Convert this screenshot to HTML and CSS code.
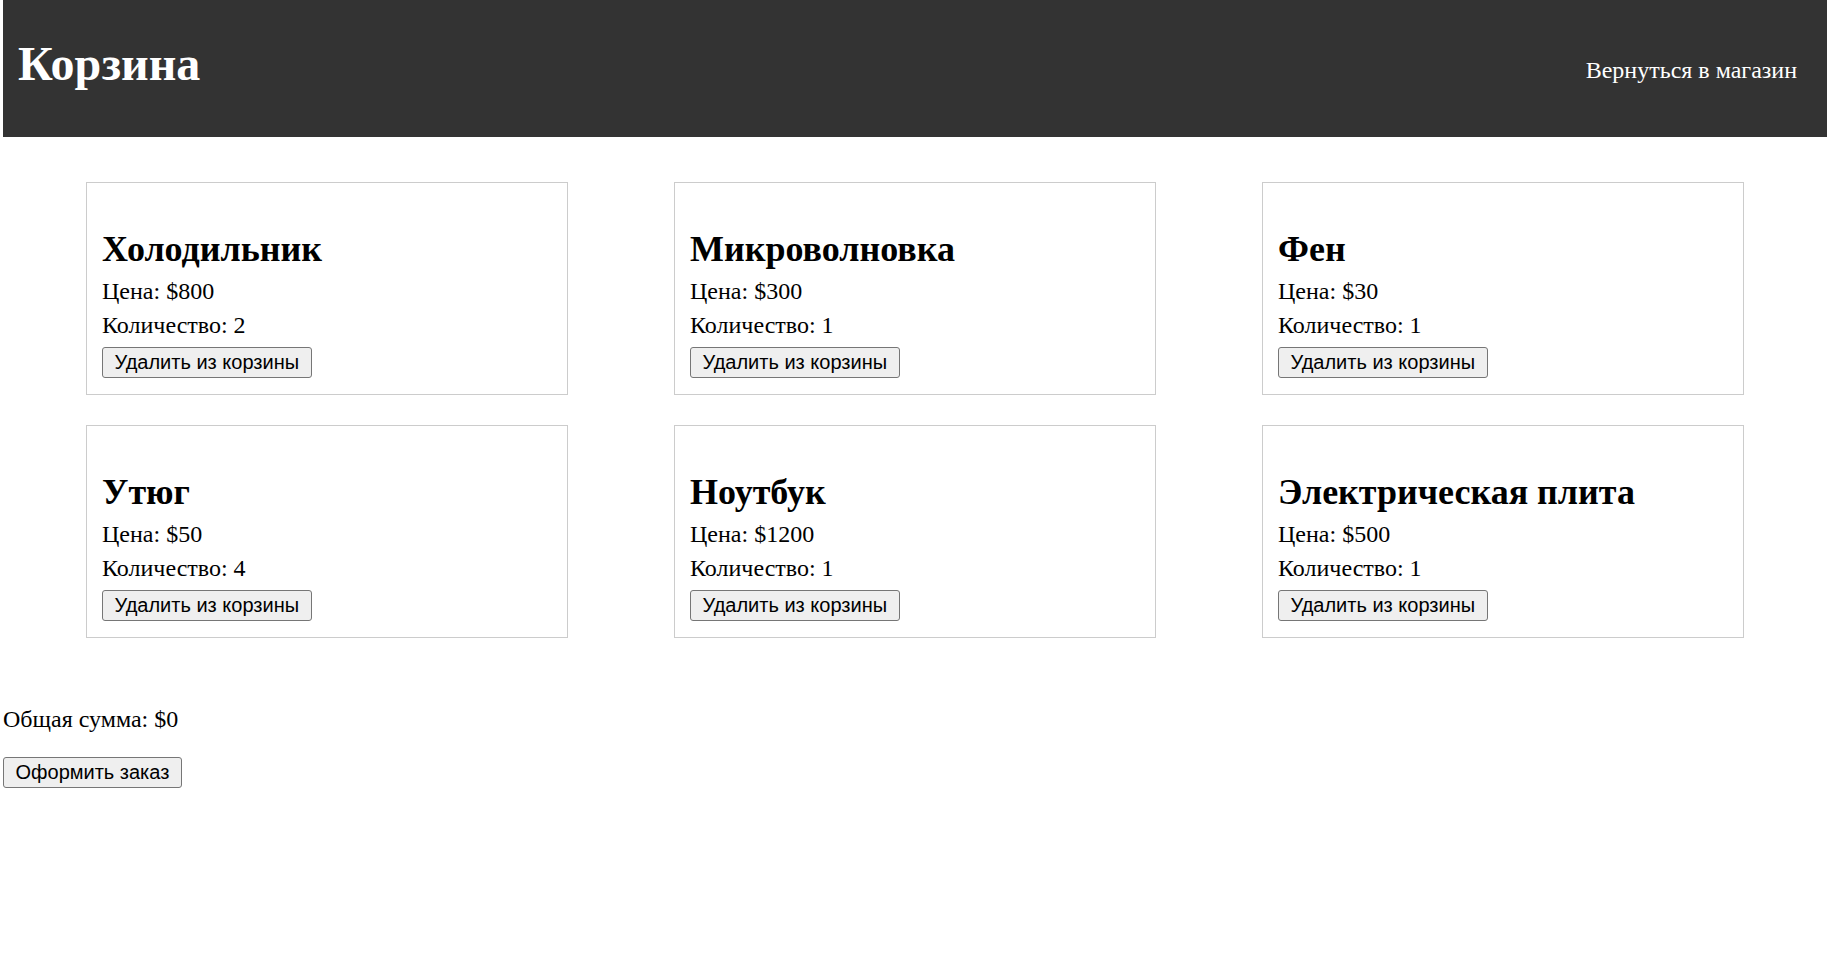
FILE: index.html
```html
<!DOCTYPE html>
<html lang="ru">
<head>
<meta charset="utf-8">
<title>Корзина</title>
<link rel="stylesheet" href="styles.css">
</head>
<body>
<div class="page">
  <header class="topbar">
    <h1 class="title">Корзина</h1>
    <a class="back" href="#">Вернуться в магазин</a>
  </header>
  <main class="cart">
    <div class="item">
      <h2 class="item-name">Холодильник</h2>
      <p class="item-line">Цена: $800</p>
      <p class="item-line">Количество: 2</p>
      <button class="btn item-btn">Удалить из корзины</button>
    </div>
    <div class="item">
      <h2 class="item-name">Микроволновка</h2>
      <p class="item-line">Цена: $300</p>
      <p class="item-line">Количество: 1</p>
      <button class="btn item-btn">Удалить из корзины</button>
    </div>
    <div class="item">
      <h2 class="item-name">Фен</h2>
      <p class="item-line">Цена: $30</p>
      <p class="item-line">Количество: 1</p>
      <button class="btn item-btn">Удалить из корзины</button>
    </div>
    <div class="item">
      <h2 class="item-name">Утюг</h2>
      <p class="item-line">Цена: $50</p>
      <p class="item-line">Количество: 4</p>
      <button class="btn item-btn">Удалить из корзины</button>
    </div>
    <div class="item">
      <h2 class="item-name">Ноутбук</h2>
      <p class="item-line">Цена: $1200</p>
      <p class="item-line">Количество: 1</p>
      <button class="btn item-btn">Удалить из корзины</button>
    </div>
    <div class="item">
      <h2 class="item-name">Электрическая плита</h2>
      <p class="item-line">Цена: $500</p>
      <p class="item-line">Количество: 1</p>
      <button class="btn item-btn">Удалить из корзины</button>
    </div>
  </main>
  <div class="summary">
    <p class="total">Общая сумма: $0</p>
    <button class="btn">Оформить заказ</button>
  </div>
</div>
</body>
</html>
```

FILE: styles.css
```css
html, body {
  margin: 0;
  padding: 0;
  background: #fff;
}

body {
  font-family: "Liberation Serif", "Times New Roman", serif;
  font-size: 24px;
  color: #000;
}

.page {
  padding-left: 3px;
}

.topbar {
  display: flex;
  justify-content: space-between;
  align-items: flex-start;
  box-sizing: border-box;
  height: 137px;
  margin-right: 12px;
  padding: 0 30px 0 15px;
  background: #333;
  color: #fff;
}

.title {
  margin: 36px 0 0;
  font-size: 48px;
  font-weight: bold;
  line-height: 55px;
}

.back {
  margin-top: 57px;
  color: #fff;
  text-decoration: none;
  font-size: 24px;
}

.cart {
  display: grid;
  grid-template-columns: repeat(3, 482px);
  column-gap: 106px;
  row-gap: 30px;
  padding: 45px 0 0 83px;
}

.item {
  box-sizing: border-box;
  height: 213px;
  padding: 15px;
  border: 1px solid #ccc;
}

.item-name {
  margin: 30px 0 8px;
  font-size: 36px;
  font-weight: bold;
}

.item-line {
  margin: 0;
}

.item-line + .item-line {
  margin-top: 7px;
}

.btn {
  box-sizing: border-box;
  height: 31px;
  padding: 0 11.5px;
  border: 1px solid #767676;
  border-radius: 3px;
  background: #efefef;
  color: #000;
  font-family: "Liberation Sans", Arial, sans-serif;
  font-size: 20px;
  line-height: 29px;
}

.item-btn {
  display: block;
  margin-top: 8px;
}

.summary {
  padding-top: 68px;
}

.total {
  margin: 0 0 24px;
}
```
